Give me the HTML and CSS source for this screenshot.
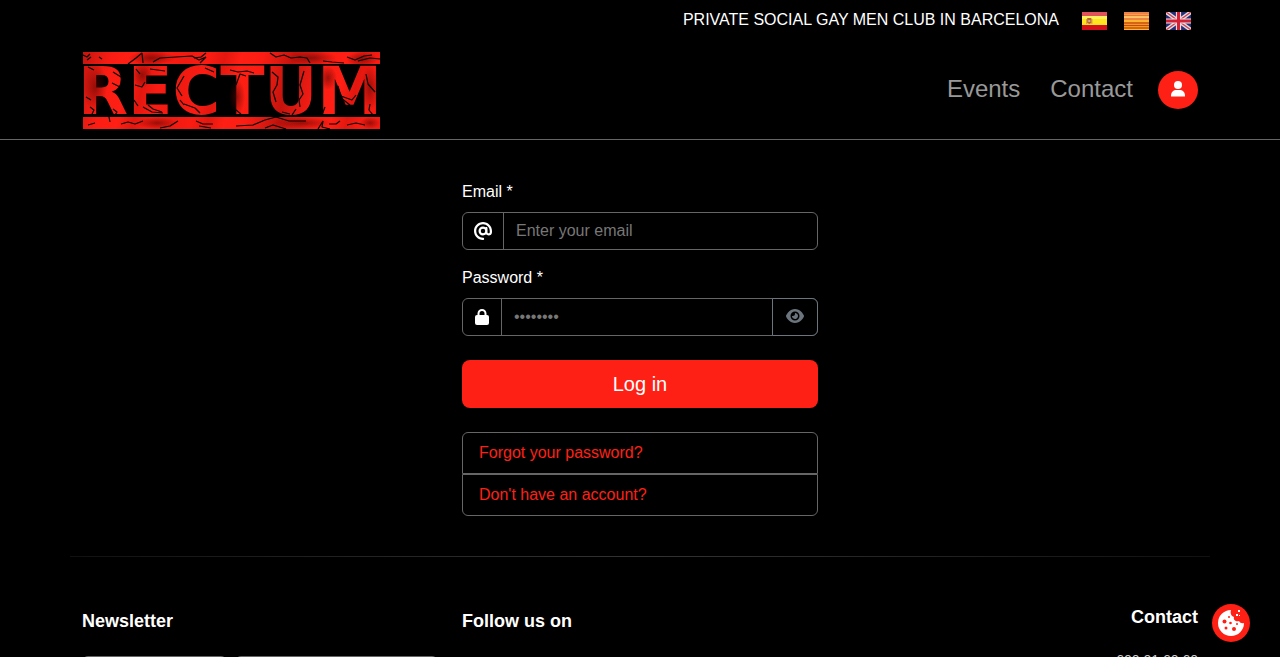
FILE: index.html
```html
<!DOCTYPE html>
<html lang="en">
<head>
<meta charset="utf-8">
<meta name="viewport" content="width=device-width, initial-scale=1">
<title>Rectum – Log in</title>
<link rel="stylesheet" href="styles.css">
</head>
<body>
<header class="header">
  <div class="container topbar">
    <span class="tagline">PRIVATE SOCIAL GAY MEN CLUB IN BARCELONA</span>
    <nav class="langs" aria-label="Language">
      <a href="#es" aria-label="Español"><svg class="flag" viewBox="0 0 24 18" preserveAspectRatio="none">
        <rect width="24" height="18" fill="#d5101b"/><rect width="24" height="5" fill="#e0525a"/><rect y="4" width="24" height="9" fill="#ffe51f"/><rect y="4" width="24" height="3" fill="#fff05f"/>
        <path d="M4 7h1v5H4zM9 7h1v5H9z" fill="#cf9a50"/><path d="M5 6h4v5l-2 1-2-1z" fill="#b9652c"/><path d="M6 8h2v2H6z" fill="#d9a8a0"/>
      </svg></a>
      <a href="#ca" aria-label="Català"><svg class="flag" viewBox="0 0 24 18" preserveAspectRatio="none">
        <rect width="24" height="18" fill="#ffb52e"/><path d="M0 1h24M0 3.500h24M0 7h24" stroke="#e8714f" stroke-width="1.300"/><path d="M0 11h24M0 13.500h24M0 16h24" stroke="#c8490c" stroke-width="1.300"/><path d="M0 5h24" stroke="#ffd493"/>
      </svg></a>
      <a href="#en" aria-label="English"><svg class="flag" viewBox="0 0 24 18" preserveAspectRatio="none">
        <rect width="24" height="18" fill="#262d78"/><path d="M0 0l24 18M24 0L0 18" stroke="#ddd" stroke-width="4"/><path d="M0 0l24 18M24 0L0 18" stroke="#d43b50" stroke-width="1.300"/><path d="M12 0v18M0 9h24" stroke="#f4e4e8" stroke-width="5"/><path d="M12 0v18M0 9h24" stroke="#d51f35" stroke-width="3"/>
      </svg></a>
    </nav>
  </div>
  <div class="container mainbar">
    <a class="brand" href="#home" aria-label="Rectum">
      <svg class="logo" viewBox="0 0 300 78">
        <defs>
          <linearGradient id="red" x1="0" y1="0" x2="100" y2="26" gradientUnits="userSpaceOnUse" spreadMethod="reflect">
            <stop offset="0" stop-color="#c4130c"/><stop offset=".15" stop-color="#e01a12"/><stop offset=".3" stop-color="#fb1d13"/><stop offset=".5" stop-color="#ff1f14"/><stop offset=".65" stop-color="#e3170f"/><stop offset=".8" stop-color="#fa1c13"/><stop offset="1" stop-color="#ef1a11"/>
          </linearGradient>
          <radialGradient id="shade"><stop offset="0" stop-color="#5d0502" stop-opacity=".6"/><stop offset="1" stop-color="#5d0502" stop-opacity="0"/></radialGradient>
        </defs>
        <g fill="url(#red)"><rect x="1" width="297" height="12"/><rect x="1" y="65" width="297" height="12"/>
        <text class="logo-text" x="-4" y="62">RECTUM</text></g>
        <g fill="url(#shade)"><ellipse cx="13" cy="35" rx="12" ry="24"/><ellipse cx="70" cy="6" rx="24" ry="7"/><ellipse cx="60" cy="23" rx="10" ry="13"/><ellipse cx="155" cy="45" rx="8" ry="18"/><ellipse cx="230" cy="6" rx="25" ry="7"/><ellipse cx="75" cy="71" rx="20" ry="6"/><ellipse cx="280" cy="7" rx="16" ry="7"/><ellipse cx="288" cy="36" rx="9" ry="23"/><ellipse cx="246" cy="26" rx="9" ry="12"/><ellipse cx="220" cy="71" rx="30" ry="6"/><ellipse cx="288" cy="71" rx="10" ry="6"/></g>
        <g class="cracks">
          <path d="M1 3l4 2 3-3M5 8l4-3M17 5l3 2M46 12l8-6 6-5 1 10M71 10l7-4 16-1 16-1 7 4 7-3-6 6M112 6l7-1 5-4"/>
          <path d="M188 1l6 4 8-2 7 3 9-1 7 1 3 5M241 9l9 1 12 1M265 5l8 3 9-4 8-1M276 9l12-3 10 1"/>
          <path d="M6 15l6 3M31 20l8 5M30 31l8 4 7-1M4 45l5 3M8 55l4 3-2 4M31 57l4 3-2 3M54 17l4 5M53 33l7 2 3-5M52 48l4 6M68 17l15 2M61 55l9 5 11 1M66 53l5 4 9 3"/>
          <path d="M102 24l-7 12 5 8M98 48l4 5M102 52l11 4 5 5M123 16l9 4M148 18l8 2 9-1 7 2M154 33l4-11 6 2M150 60l4-2 5 4"/>
          <path d="M190 20l6 5-1 8-4 7 3 10M200 60l8 2M222 19l-4 14 3 9-4 6 1 7M214 57l-4 6M243 55l-3 8M256 34l3 12 9 7M256 43l14 5 4-5M284 22l2 10 7 8M288 52l-1 6 4 5"/>
          <path d="M6 73l7-2M27 65l1 5M39 72l7-2 7 2 8-3M78 76l10-2 8-5M114 69l7 3 10 0M117 74l12 2M154 74l17-1 12-5 11-3 13 4 17 0M183 76l8-3 13 4M236 77l5-8-1 6 8 2M247 72l7 0 4-3M265 73l9-2 9 2"/>
        </g>
      </svg>
    </a>
    <nav class="nav" aria-label="Main">
      <a class="nav-link" href="#events">Events</a>
      <a class="nav-link" href="#contact">Contact</a>
      <a class="user" href="#login" aria-label="Account"><svg width="16" height="18" viewBox="0 0 16 18" fill="currentColor"><circle cx="8" cy="5" r="4"/><path d="M1 16.500v-1c0-3.500 2.500-5.500 5.500-5.500h3c3 0 5.500 2 5.500 5.500v1z"/></svg></a>
    </nav>
  </div>
</header>
<main class="container main">
  <form class="login">
    <label class="label" for="email">Email *</label>
    <div class="group">
      <span class="addon"><svg width="18" height="18" viewBox="0 0 512 512"><path fill="currentColor" d="M256 64C150 64 64 150 64 256s86 192 192 192c17.700 0 32 14.300 32 32s-14.300 32-32 32C114.600 512 0 397.400 0 256S114.600 0 256 0s256 114.600 256 256v32c0 53-43 96-96 96-29.300 0-55.600-13.200-73.200-33.900C320 371.100 289.500 384 256 384c-70.700 0-128-57.300-128-128s57.300-128 128-128c27.900 0 53.700 8.900 74.700 24.100 5.700-5 13.100-8.100 21.300-8.100 17.700 0 32 14.300 32 32v112c0 17.700 14.300 32 32 32s32-14.300 32-32v-32c0-106-86-192-192-192zm64 192a64 64 0 1 0-128 0 64 64 0 1 0 128 0z"/></svg></span>
      <input class="field" id="email" type="email" placeholder="Enter your email">
    </div>
    <label class="label" for="password">Password *</label>
    <div class="group">
      <span class="addon"><svg width="16" height="18" viewBox="0 0 16 18"><path d="M4.500 9V5.500a3.500 3.500 0 0 1 7 0V9" fill="none" stroke="currentColor" stroke-width="2"/><rect x="1" y="7" width="14" height="10" rx="2" fill="currentColor"/></svg></span>
      <input class="field" id="password" type="password" placeholder="••••••••">
      <button class="reveal" type="button" aria-label="Show password"><svg width="18" height="16" viewBox="0 0 576 512"><path fill="currentColor" d="M288 32c-80.800 0-145.500 36.800-192.600 80.600C48.600 156 17.300 208 2.500 243.700c-3.300 7.900-3.300 16.700 0 24.600C17.300 304 48.600 356 95.400 399.400 142.500 443.200 207.200 480 288 480s145.500-36.800 192.600-80.600c46.800-43.500 78.100-95.400 93-131.100 3.300-7.900 3.300-16.700 0-24.600-14.900-35.700-46.200-87.700-93-131.100C433.500 68.800 368.800 32 288 32zM144 256a144 144 0 1 1 288 0 144 144 0 1 1-288 0zm144-64c0 35.300-28.700 64-64 64-7.100 0-13.900-1.200-20.300-3.300-5.500-1.800-11.900 1.600-11.700 7.400.3 6.900 1.300 13.800 3.200 20.700 13.700 51.200 66.400 81.600 117.600 67.900s81.600-66.400 67.900-117.600c-11.100-41.500-47.800-69.400-88.600-71.100-5.800-.2-9.200 6.100-7.400 11.700 2.100 6.400 3.300 13.200 3.300 20.300z"/></svg></button>
    </div>
    <button class="submit" type="submit">Log in</button>
    <div class="links">
      <a href="#forgot">Forgot your password?</a>
      <a href="#register">Don't have an account?</a>
    </div>
  </form>
</main>
<footer class="footer">
  <section>
    <h2 class="title">Newsletter</h2>
    <div class="newsletter"><input class="news-name" type="text" aria-label="Name"><input class="news-email" type="email" aria-label="Email address"></div>
  </section>
  <section><h2 class="title">Follow us on</h2></section>
  <section class="contact"><h2 class="title">Contact</h2><a href="#phone">600 01 60 60</a></section>
</footer>
<button class="cookies" type="button" aria-label="Cookie settings">
  <svg width="26" height="26" viewBox="0 0 26 26"><path fill="#fff" d="M13 0a13 13 0 1 0 13 13c-2 .7-4 0-5-2-3 1-6-1-5-4-3-1-4-4-3-7z"/><g fill="#ff2015"><circle cx="6.500" cy="11.500" r="2"/><circle cx="12.500" cy="13" r="1.300"/><circle cx="11" cy="7" r="1"/><circle cx="8" cy="18" r="1.500"/><circle cx="16" cy="19" r="2"/><circle cx="19" cy="14" r="1"/></g><path fill="#fff" d="M20 0h2v2h-2zM18 4h2v2h-2zM21 5h1v1h-1z"/></svg>
</button>
</body>
</html>
```
FILE: styles.css
```css
*, *::before, *::after { box-sizing: border-box; }
html { height: 100%; overflow: hidden; }
body {
  height: 100%;
  margin: 0;
  overflow: hidden;
  background: #000;
  color: #fff;
  font: 16px/24px "Liberation Sans", Arial, sans-serif;
}
a { color: inherit; text-decoration: none; }
svg { display: block; }
input, button { font: inherit; }
.container { width: 100%; max-width: 1140px; margin: 0 auto; padding: 0 12px; }
.header { border-bottom: 1px solid #666; }
.topbar { display: flex; justify-content: flex-end; align-items: center; gap: 23px; height: 40px; }
.langs { display: flex; gap: 17px; padding: 2px 7px 0 0; }
.flag { width: 25px; height: 18px; }
.mainbar { display: flex; justify-content: space-between; align-items: center; height: 99px; }
.brand { padding-top: 2px; }
.logo { width: 300px; height: 78px; overflow: visible; }
.logo-text { font-family: "DejaVu Sans", sans-serif; font-weight: 700; font-size: 65px; font-kerning: none; }
.cracks { fill: none; stroke: #000; stroke-width: 1.200; stroke-linejoin: bevel; }
.nav { display: flex; align-items: center; font-size: 24px; line-height: 36px; }
.nav-link { margin-right: 30px; padding-bottom: 2px; color: #999; }
.nav-link + .nav-link { margin-right: 25px; }
.user { display: grid; place-items: center; width: 40px; height: 38px; padding-bottom: 2px; border-radius: 50%; background: #ff2015; color: #fff; }
.main { display: flex; justify-content: center; padding-top: 40px; padding-bottom: 40px; }
.login { display: flex; flex-direction: column; width: 356px; }
.label { margin-bottom: 8px; }
.group { display: flex; height: 38px; margin-bottom: 16px; border: 1px solid #666; border-radius: 6px; }
.addon { display: flex; align-items: center; padding: 0 11px; border-right: 1px solid #666; }
.field { flex: 1; min-width: 0; padding: 0 12px; border: 0; outline: 0; background: transparent; color: #fff; }
.field::placeholder { color: #777; opacity: 1; }
.reveal { display: grid; place-items: center; width: 46px; margin: -1px; padding: 0 0 2px; border: 1px solid #6c757d; border-radius: 0 6px 6px 0; background: #000; color: #6c757d; }
.submit { height: 48px; margin: 8px 0 24px; border: 0; border-radius: 8px; background: #ff2015; color: #fff; font-size: 20px; }
.links { display: flex; flex-direction: column; color: #ff2015; }
.links a { padding: 8px 16px; border: 1px solid #666; }
.links a:first-child { border-radius: 6px 6px 0 0; }
.links a:last-child { border-radius: 0 0 6px 6px; }
.footer { position: relative; display: grid; grid-template-columns: repeat(3, minmax(0, 1fr)); gap: 24px; max-width: 1140px; margin: 0 auto; padding: 48px 12px; }
.footer::before { content: ""; position: absolute; top: 0; left: 0; right: 0; height: 1px; background: linear-gradient(90deg, #111, #333 50%, #111); }
.title { margin: 6px 0 24px; font-size: 18px; line-height: 22px; }
.newsletter { display: flex; gap: 8px; }
.newsletter input { height: 38px; min-width: 0; border: 1px solid #666; border-radius: 6px; background: #000; color: #fff; }
.news-name { flex: 12; }
.news-email { flex: 17; }
.contact { text-align: right; color: #ccc; font-size: 14px; line-height: 20px; }
.contact .title { margin: 2px 0 22px; color: #fff; }
.cookies { position: fixed; right: 30px; bottom: 15px; display: grid; place-items: center; width: 38px; height: 38px; padding: 0; border: 0; border-radius: 50%; background: #ff2015; }
```
